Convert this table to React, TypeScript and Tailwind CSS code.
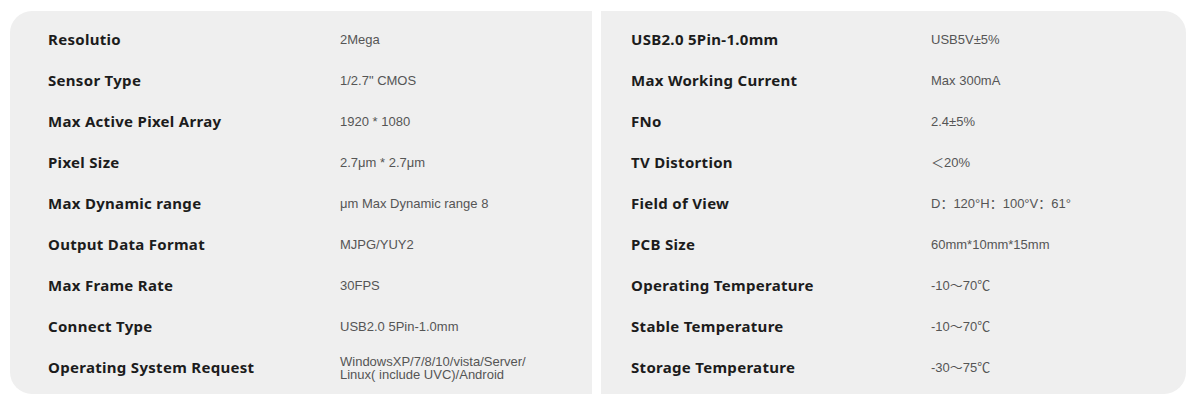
import React from "react";

const left: [string, React.ReactNode][] = [
  ["Resolutio", "2Mega"],
  ["Sensor Type", '1/2.7" CMOS'],
  ["Max Active Pixel Array", "1920 * 1080"],
  ["Pixel Size", "2.7μm * 2.7μm"],
  ["Max Dynamic range", "μm Max Dynamic range 8"],
  ["Output Data Format", "MJPG/YUY2"],
  ["Max Frame Rate", "30FPS"],
  ["Connect Type", "USB2.0 5Pin-1.0mm"],
  [
    "Operating System Request",
    <span className="block leading-[13px]">
      WindowsXP/7/8/10/vista/Server/
      <br />
      Linux( include UVC)/Android
    </span>,
  ],
];

const right: [string, React.ReactNode][] = [
  ["USB2.0 5Pin-1.0mm", "USB5V±5%"],
  ["Max Working Current", "Max 300mA"],
  ["FNo", "2.4±5%"],
  ["TV Distortion", "＜20%"],
  ["Field of View", "D：120°H：100°V：61°"],
  ["PCB Size", "60mm*10mm*15mm"],
  ["Operating Temperature", "-10～70℃"],
  ["Stable Temperature", "-10～70℃"],
  ["Storage Temperature", "-30～75℃"],
];

function Panel({
  rows,
  labelW,
  pl,
  className,
}: {
  rows: [string, React.ReactNode][];
  labelW: string;
  pl: string;
  className: string;
}) {
  return (
    <div className={`bg-[#efefef] h-[383px] pt-[8px] ${className}`}>
      {rows.map(([k, v], i) => (
        <div key={i} className={`flex items-center h-[41px] ${pl}`}>
          <div
            className={`${labelW} shrink-0 text-[15px] font-bold text-[#1c1c1c] tracking-[0.3px]`}
            style={{ fontFamily: '"Noto Sans", "Liberation Sans", sans-serif' }}
          >
            {k}
          </div>
          <div
            className="text-[13px] text-[#555555]"
            style={{ fontFamily: '"Liberation Sans", "Noto Sans CJK SC", sans-serif' }}
          >
            {v}
          </div>
        </div>
      ))}
    </div>
  );
}

export default function App() {
  return (
    <div className="w-[1200px] h-[407px] bg-white pl-[10px] pt-[11px] flex gap-[9px]">
      <Panel
        rows={left}
        labelW="w-[292px]"
        pl="pl-[38px]"
        className="w-[582px] rounded-l-[22px]"
      />
      <Panel
        rows={right}
        labelW="w-[300px]"
        pl="pl-[30px]"
        className="w-[585px] rounded-r-[22px]"
      />
    </div>
  );
}
